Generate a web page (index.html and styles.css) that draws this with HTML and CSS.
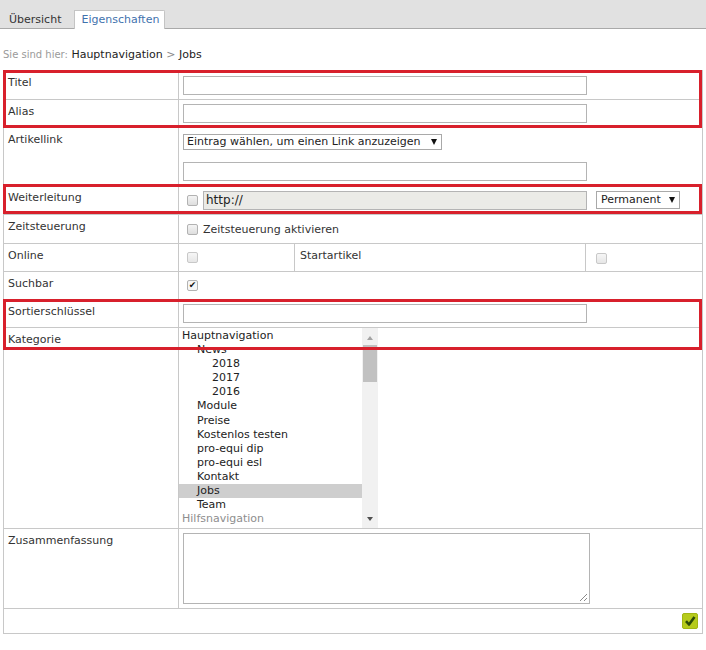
FILE: index.html
```html
<!DOCTYPE html>
<html lang="de">
<head>
<meta charset="utf-8">
<title>Eigenschaften</title>
<link rel="stylesheet" href="styles.css">
</head>
<body>
<div class="tabs">
  <span class="tab">Übersicht</span>
  <span class="tab active">Eigenschaften</span>
</div>
<div class="crumb"><span class="crumb-label">Sie sind hier:</span> Hauptnavigation <span class="sep">&gt;</span> Jobs</div>

<div class="form">
  <div class="row h28">
    <div class="lbl">Titel</div>
    <div class="val center"><span class="input w-main"></span></div>
  </div>
  <div class="row h27 bt">
    <div class="lbl">Alias</div>
    <div class="val center"><span class="input w-main"></span></div>
  </div>
  <div class="row h57 bt">
    <div class="lbl">Artikellink</div>
    <div class="val stack">
      <span class="select w-link"><span class="sel-text">Eintrag wählen, um einen Link anzuzeigen</span><span class="tri"></span></span>
      <span class="input w-main"></span>
    </div>
  </div>
  <div class="row h28 bt">
    <div class="lbl">Weiterleitung</div>
    <div class="val center">
      <span class="cb cb-in"></span>
      <span class="input disabled w-url">http://</span>
      <span class="select w-perm"><span class="sel-text">Permanent</span><span class="tri"></span></span>
    </div>
  </div>
  <div class="row h28 bt">
    <div class="lbl">Zeitsteuerung</div>
    <div class="val center"><span class="cb cb-in"></span><span class="cb-text">Zeitsteuerung aktivieren</span></div>
  </div>
  <div class="row h27 bt four">
    <div class="lbl">Online</div>
    <div class="val center sep-r"><span class="cb cb-dim"></span></div>
    <div class="lbl lbl-inner">Startartikel</div>
    <div class="val center cell-last"><span class="cb cb-dim"></span></div>
  </div>
  <div class="row h27 bt">
    <div class="lbl">Suchbar</div>
    <div class="val center"><span class="cb cb-in checked">&#10004;</span></div>
  </div>
  <div class="row h27 bt">
    <div class="lbl">Sortierschlüssel</div>
    <div class="val center"><span class="input w-main"></span></div>
  </div>
  <div class="row h200 bt">
    <div class="lbl">Kategorie</div>
    <div class="val list-cell">
      <div class="listbox">
        <ul class="items">
          <li class="l0">Hauptnavigation</li>
          <li class="l1">News</li>
          <li class="l2">2018</li>
          <li class="l2">2017</li>
          <li class="l2">2016</li>
          <li class="l1">Module</li>
          <li class="l1">Preise</li>
          <li class="l1">Kostenlos testen</li>
          <li class="l1">pro-equi dip</li>
          <li class="l1">pro-equi esl</li>
          <li class="l1">Kontakt</li>
          <li class="l1 selected">Jobs</li>
          <li class="l1">Team</li>
          <li class="l0 muted">Hilfsnavigation</li>
        </ul>
        <div class="scrollbar">
          <span class="arrow up"></span>
          <span class="thumb"></span>
          <span class="arrow down"></span>
        </div>
      </div>
    </div>
  </div>
  <div class="row h79 bt">
    <div class="lbl">Zusammenfassung</div>
    <div class="val top"><span class="textarea">
      <svg class="grip" width="9" height="9" viewBox="0 0 9 9"><path d="M8 1 L1 8 M8 5 L5 8" stroke="#8a8a8a" stroke-width="1" fill="none"/></svg>
    </span></div>
  </div>
  <div class="row h24 bt footer">
    <span class="ok"><svg width="14" height="14" viewBox="0 0 14 14"><path d="M3 7.2 L6 10.5 L11.5 3" stroke="#2c4a08" stroke-width="2.6" fill="none" stroke-linejoin="round"/></svg></span>
  </div>
</div>

<div class="mark m1"></div>
<div class="mark m2"></div>
<div class="mark m3"></div>
</body>
</html>
```

FILE: styles.css
```css
* { box-sizing: border-box; }
html, body { margin: 0; padding: 0; background: #fff; }
body {
  font-family: "DejaVu Sans", Verdana, sans-serif;
  font-size: 11px;
  color: #333;
  position: relative;
  width: 706px;
  height: 650px;
  overflow: hidden;
}

/* tabs */
.tabs {
  height: 29px;
  background: #e1e1e1;
  border-bottom: 1px solid #a9a9a9;
  display: flex;
  align-items: flex-end;
}
.tab {
  height: 19px;
  line-height: 18px;
  margin-bottom: -1px;
  padding: 0 9px;
  color: #333;
  border-top: 1px solid transparent;
}
.tab.active {
  margin-left: 4px;
  padding: 0 5px 0 6px;
  background: #fff;
  color: #3f72ad;
  border: 1px solid #c4c4c4;
  border-bottom: none;
  border-top-right-radius: 2px;
}

/* breadcrumb */
.crumb {
  margin-top: 19px;
  padding-left: 3px;
  line-height: 14px;
  color: #222;
}
.crumb-label { font-size: 10px; color: #9a9a9a; }
.sep { color: #8a8a8a; }

/* form */
.form {
  margin: 8px 0 0 3px;
  width: 700px;
  border: 1px solid #c8c8c8;
}
.row {
  display: grid;
  grid-template-columns: 175px 1fr;
}
.row.bt { border-top: 1px solid #c8c8c8; }
.h24 { height: 24px; }
.h27 { height: 27px; }
.h28 { height: 28px; }
.h57 { height: 57px; }
.h79 { height: 79px; }
.h200 { height: 200px; }
.bt.h24 { height: 25px; }
.bt.h27 { height: 28px; }
.bt.h28 { height: 29px; }
.bt.h57 { height: 58px; }
.bt.h79 { height: 80px; }
.bt.h200 { height: 201px; }

.lbl {
  border-right: 1px solid #c8c8c8;
  padding: 5px 0 0 4px;
  line-height: 13px;
  color: #333;
}
.val {
  padding-left: 4px;
  display: flex;
}
.val.center { align-items: center; }
.val.top { align-items: flex-start; padding-top: 4px; }
.val.stack {
  flex-direction: column;
  align-items: flex-start;
  padding-top: 6px;
  gap: 12px;
}

.four { grid-template-columns: 175px 116px 291px 1fr; }
.sep-r { border-right: 1px solid #c8c8c8; padding-left: 8px; }
.lbl-inner { padding-left: 5px; }
.cell-last { padding-left: 10px; padding-top: 1px; }

/* controls */
.input {
  display: block;
  height: 19px;
  border: 1px solid #b4b4b4;
  background: #fff;
}
.w-main { width: 404px; }
.w-url { width: 384px; margin-left: 5px; }
.input.disabled {
  background: #ebebe7;
  color: #222;
  font-size: 12px;
  line-height: 17px;
  padding-left: 2px;
}
.select {
  display: flex;
  align-items: center;
  height: 16px;
  border: 1px solid #a9a9a9;
  background: #fff;
  color: #222;
  padding: 0 4px 0 3px;
  line-height: 14px;
}
.w-link { width: 259px; }
.w-perm { width: 84px; height: 18px; margin-left: 9px; padding-left: 4px; }
.sel-text { flex: 1; white-space: nowrap; }
.tri {
  width: 0; height: 0;
  border-left: 3px solid transparent;
  border-right: 3px solid transparent;
  border-top: 6px solid #111;
}

.cb {
  display: inline-flex;
  align-items: center;
  justify-content: center;
  width: 11px;
  height: 11px;
  border: 1px solid #b2b2b2;
  border-radius: 2px;
  background: linear-gradient(#f4f4f4, #dedede);
  font-size: 9px;
  line-height: 9px;
  color: #111;
}
.cb-in { margin-left: 4px; }
.cb-dim { border-color: #c8c8c8; background: linear-gradient(#f6f6f6, #e6e6e6); }
.cb-text { margin-left: 5px; color: #333; }
.checked { background: #f6f6f6; }

/* listbox */
.list-cell { padding-left: 0; }
.listbox {
  width: 199px;
  height: 200px;
  display: flex;
  background: #fff;
}
.items {
  list-style: none;
  margin: 0;
  padding: 1px 0 0 0;
  flex: 1;
  overflow: hidden;
  color: #222;
  line-height: 14.1px;
}
.items li { height: 14.1px; white-space: nowrap; }
.l0 { padding-left: 3px; }
.l1 { padding-left: 18px; }
.l2 { padding-left: 33px; }
.selected { background: #cecece; }
.muted { color: #8e8e8e; }

.scrollbar {
  width: 16px;
  background: #f1f1f1;
  display: flex;
  flex-direction: column;
  align-items: center;
}
.arrow {
  width: 0; height: 0;
  border-left: 3.5px solid transparent;
  border-right: 3.5px solid transparent;
}
.arrow.up { border-bottom: 4px solid #a3a3a3; margin-top: 8px; }
.thumb {
  width: 14px;
  height: 37px;
  background: #c1c1c1;
  margin-top: 5px;
}
.arrow.down { border-top: 4px solid #505050; margin-top: auto; margin-bottom: 7px; }

.textarea {
  position: relative;
  display: block;
  width: 407px;
  height: 71px;
  border: 1px solid #b4b4b4;
  background: #fff;
}
.grip { position: absolute; right: 1px; bottom: 1px; }

.footer {
  display: flex;
  justify-content: flex-end;
  align-items: center;
  padding-right: 4px;
}
.ok {
  display: flex;
  align-items: center;
  justify-content: center;
  width: 16px;
  height: 16px;
  background: #b6cb1c;
  border: 1px solid #a2b614;
  border-radius: 2px;
}

/* annotation boxes */
.mark {
  position: absolute;
  left: 3px;
  width: 699px;
  border: 3px solid #d8202c;
}
.m1 { top: 70px; height: 58px; }
.m2 { top: 184px; height: 30px; }
.m3 { top: 299px; height: 51px; }
```
